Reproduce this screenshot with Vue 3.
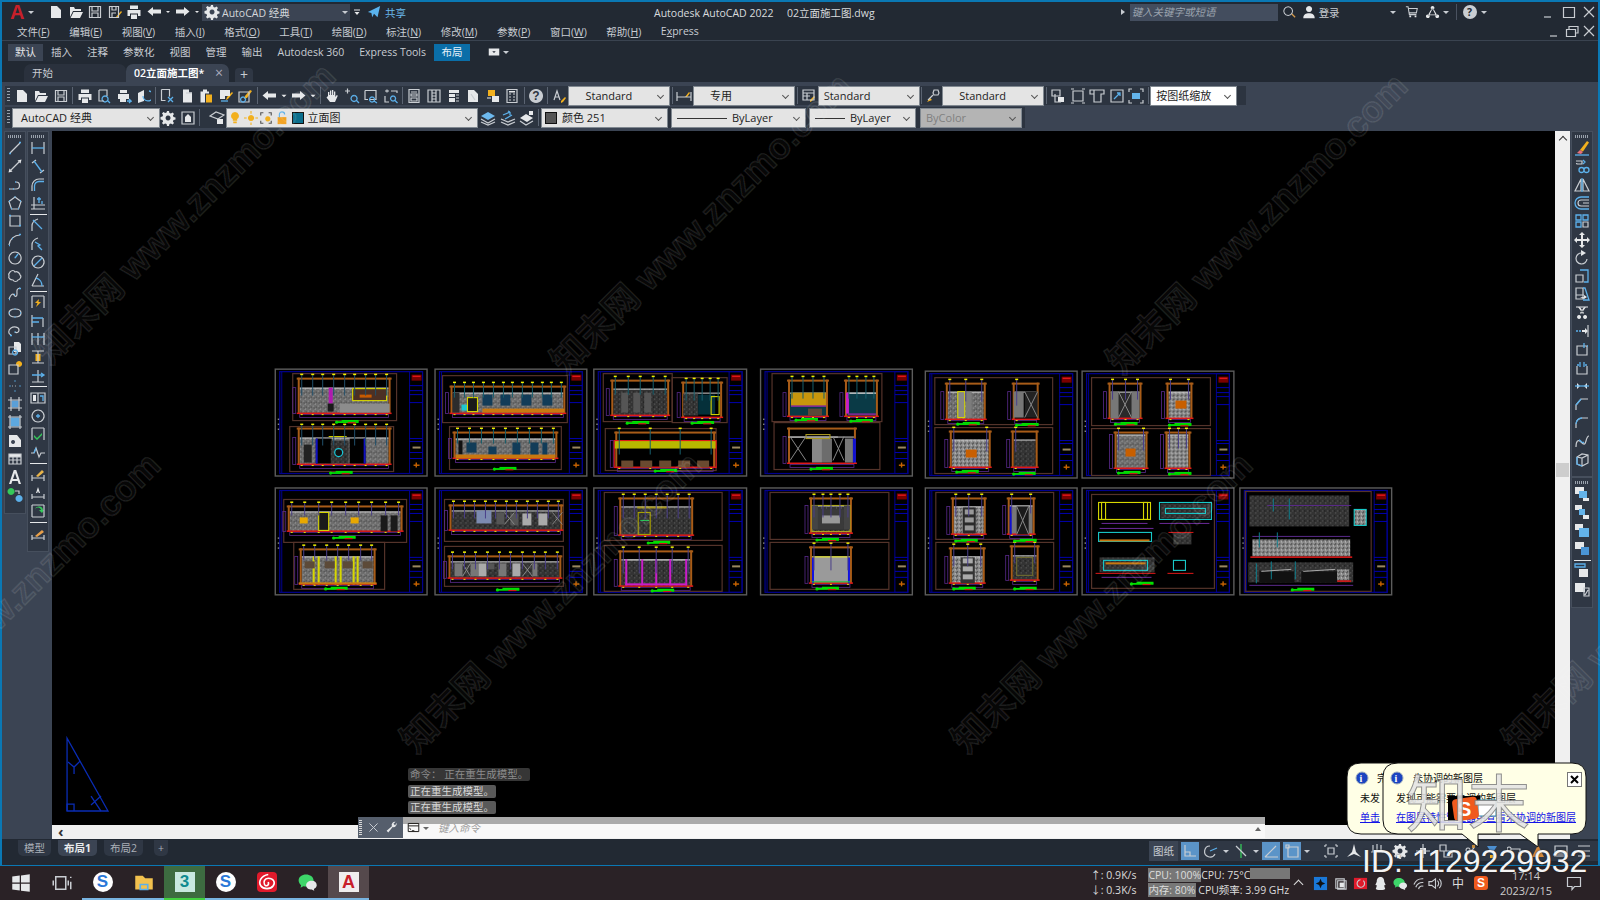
<template>
  <div class="screen">
    <div class="win">
      <div class="titlebar">
        <span class="logo-a">A</span>
        <span class="caret"></span>
        <div class="qat">
          <Ic v-for="n in quick" :key="n" :n="n" />
        </div>
        <div class="workspace">
          <Ic n="gear" />
          <span>AutoCAD 经典</span>
          <span class="caret caret--end"></span>
        </div>
        <Ic n="custom" class="custom" />
        <Ic n="share" class="share" />
        <span class="share-text">共享</span>
        <span class="title">Autodesk AutoCAD 2022 &nbsp;&nbsp;&nbsp; 02立面施工图.dwg</span>
        <span class="tri"></span>
        <div class="search">键入关键字或短语</div>
        <Ic n="search" class="search-ic" />
        <Ic n="user" class="user-ic" />
        <span class="login">登录</span>
        <span class="caret login-caret"></span>
        <Ic n="cart" class="cart" />
        <Ic n="a360" class="a360" />
        <span class="caret"></span>
        <span class="vsep"></span>
        <span class="help">?</span>
        <span class="caret"></span>
        <div class="winbtns">
          <Ic n="min" /><Ic n="max" /><Ic n="close" />
        </div>
      </div>

      <div class="menubar">
        <span v-for="m in menus" :key="m[0]" class="menu-item">{{ m[0] }}<template v-if="m[1]">(<u>{{ m[1] }}</u>)</template></span>
        <span class="menu-item"><span>E<u>x</u>press</span></span>
        <div class="docbtns">
          <Ic n="min" /><Ic n="restore" /><Ic n="close" />
        </div>
      </div>

      <div class="ribbon">
        <span v-for="t in ribbonTabs" :key="t" class="rtab" :class="{ 'rtab--on': t === '默认', 'rtab--blue': t === '布局' }">{{ t }}</span>
        <Ic n="panel" class="panel-ic" />
        <span class="caret"></span>
      </div>

      <div class="filetabs">
        <span class="ftab ftab--home">开始</span>
        <span class="ftab ftab--on">02立面施工图*<span class="ftab-x">×</span></span>
        <span class="ftab-add">+</span>
      </div>

      <div class="toolarea">
        <div class="tb tb--one">
          <span class="grip"></span>
          <template v-for="(grp, i) in row1" :key="i">
            <Ic v-for="n in grp" :key="n" :n="n" />
            <span class="sep"></span>
          </template>
          <Ic n="textstyle" />
          <div class="drop drop--std drop--c">Standard</div>
          <span class="sep"></span>
          <Ic n="dimstyle" />
          <div class="drop drop--std drop--c">专用</div>
          <span class="sep"></span>
          <Ic n="tablestyle" />
          <div class="drop drop--std">Standard</div>
          <span class="sep"></span>
          <Ic n="mleader" />
          <div class="drop drop--std drop--c">Standard</div>
          <span class="sep"></span>
          <Ic v-for="n in viewportIcons" :key="n" :n="n" />
          <span class="sep"></span>
          <div class="drop drop--scale">按图纸缩放</div>
        </div>
        <div class="tb tb--two">
          <span class="grip"></span>
          <div class="drop drop--ws">AutoCAD 经典</div>
          <Ic n="gear" class="ws-gear" /><Ic n="lockui" />
          <span class="sep"></span>
          <Ic n="layerprop" class="layer-prop" />
          <div class="drop drop--layer">
            <Ic n="bulb" /><Ic n="sun" /><Ic n="vpfreeze" /><Ic n="padlock" />
            <span class="swatch"></span>
            <span class="layer-name">立面图</span>
          </div>
          <Ic n="layerset" /><Ic n="layerprev" /><Ic n="layermatch" />
          <span class="sep"></span>
          <div class="drop drop--color"><span class="swatch swatch--gray"></span>颜色 251</div>
          <div class="drop drop--ltype"><span class="lt-line"></span>ByLayer</div>
          <div class="drop drop--lweight"><span class="lt-line lt-line--short"></span>ByLayer</div>
          <div class="drop drop--off">ByColor</div>
        </div>
      </div>

      <div class="work">
        <div class="side side--left">
          <div class="col">
            <span class="col-grip"></span>
            <Ic v-for="n in drawIcons" :key="n" :n="n" />
          </div>
          <div class="col">
            <span class="col-grip"></span>
            <template v-for="n in dimIcons" :key="n">
              <span v-if="n[0] === '-'" class="col-sep"></span>
              <Ic v-else :n="n" />
            </template>
          </div>
        </div>

        <div class="center">
          <svg class="canvas" viewBox="52 130 1503 695">
            <defs>
              <pattern id="pg" width="5" height="5" patternUnits="userSpaceOnUse">
                <rect width="5" height="5" fill="#6e6e6e" />
                <rect width="1" height="1" fill="#b0b0b0" />
                <rect x="3" y="2" width="1" height="1" fill="#a0a0a0" />
                <rect x="1" y="3" width="1" height="1" fill="#3c3c3c" />
                <rect x="4" y="4" width="1" height="1" fill="#3c3c3c" />
              </pattern>
              <pattern id="pd" width="5" height="5" patternUnits="userSpaceOnUse">
                <rect width="5" height="5" fill="#333" />
                <rect x="1" width="1" height="1" fill="#666" />
                <rect x="3" y="3" width="1" height="1" fill="#5c5c5c" />
                <rect y="3" width="1" height="1" fill="#111" />
              </pattern>
              <pattern id="pn" width="4" height="4" patternUnits="userSpaceOnUse">
                <rect width="4" height="4" fill="#8a8a8a" />
                <rect width="1" height="1" fill="#222" />
                <rect x="2" y="2" width="1" height="1" fill="#e0e0e0" />
                <rect x="3" y="1" width="1" height="1" fill="#333" />
              </pattern>
            </defs>
            <g v-for="(s, si) in sheets" :key="si" :transform="`translate(${s.x} ${s.y})`">
              <rect x=".5" y=".5" :width="s.w" height="107" fill="none" stroke="#5c5c5c" stroke-width="1.4" />
              <rect x="5" y="3" :width="s.w - 9" height="102" fill="none" stroke="#00008e" stroke-width="1.2" />
              <line x1="7" y1="3" x2="7" y2="105" stroke="#00008e" />
              <rect v-for="d in [50, 55, 60]" :key="d" x="3" :y="d" width="1.4" height="1.4" fill="#888" />
              <rect :x="s.w - 17" y="3" width="13" height="102" fill="none" stroke="#00008e" />
              <rect :x="s.w - 15" y="6" width="10" height="6" fill="#7a0000" />
              <rect :x="s.w - 14" y="7" width="8" height="1.4" fill="#e01818" />
              <line v-for="d in titleLines" :key="d" :x1="s.w - 17" :y1="d" :x2="s.w - 4" :y2="d" stroke="#0000b0" />
              <rect :x="s.w - 14" y="78" width="8" height="2" fill="#9a8860" />
              <rect :x="s.w - 13" y="96" width="6" height="1.4" fill="#c86400" />
              <rect :x="s.w - 11" y="94" width="1.4" height="5" fill="#c86400" />

              <rect v-for="(f, fi) in s.frames" :key="fi" :x="f[0]" :y="f[1]" :width="f[2]" :height="f[3]" fill="none" stroke="#54332a" stroke-width="1.2" />

              <g v-for="(e, ei) in s.elevs" :key="ei">
                <rect :x="e.x + 3" :y="e.y + e.wt" :width="e.w - 6" :height="e.h - e.wt" :fill="e.paint" />
                <rect :x="e.x + 3" :y="e.y + e.wt" :width="e.w - 6" height="1" fill="#cfcfcf" />
                <rect :x="e.x" :y="e.y" :width="e.w" height="2" fill="#a85c18" />
                <rect :x="e.x + 1" :y="e.y" width="2" :height="e.h" fill="#a85c18" />
                <rect :x="e.x + e.w - 3" :y="e.y" width="2" :height="e.h" fill="#a85c18" />
                <rect :x="e.x + 3" :y="e.y + e.h + 1" :width="e.w - 6" height="3" fill="none" stroke="#5a2a8c" stroke-width=".8" />
                <rect :x="e.x - 4" :y="e.y + e.wt" width="3" :height="e.h - e.wt" fill="none" stroke="#5a2a8c" stroke-width=".8" />
                <rect :x="e.x" :y="e.y + e.h - 1" :width="e.w" height="1.5" fill="#e01818" />
                <rect v-for="l in e.leaders" :key="'d' + l" :x="l - 1" :y="e.y + e.h + .5" width="2" height="1" fill="#e8e800" />
              </g>

              <rect v-for="(p, pi) in s.parts" :key="pi" :x="p[0]" :y="p[1]" :width="p[2]" :height="p[3]" :fill="p[4][0] === '~' ? 'none' : p[4]" :stroke="p[4][0] === '~' ? p[4].slice(1) : 'none'" stroke-width="1.1" />
              <line v-for="(l, li) in s.lines" :key="li" :x1="l[0]" :y1="l[1]" :x2="l[2]" :y2="l[3]" :stroke="l[4]" stroke-width="1" />

              <g v-for="(e, ei) in s.elevs" :key="'l' + ei">
                <template v-for="l in e.leaders" :key="l">
                  <line :x1="l" :y1="e.y - 3" :x2="l" :y2="e.y + e.wt + e.lead" :stroke="s.lead" stroke-width="1" />
                  <rect :x="l - 1.5" :y="e.y - 4" width="3" height="1.5" fill="#f0f000" />
                </template>
              </g>

              <circle v-if="s.ring" :cx="s.ring[0]" :cy="s.ring[1]" r="4" fill="#111" stroke="#18c8d8" stroke-width="1.2" />

              <g v-for="(b, bi) in s.labels" :key="bi" :transform="`translate(${b[0]} ${b[1]})`">
                <rect y=".6" width="23" height="1.8" fill="#00e000" />
                <rect x="6" y="-.6" width="17" height="1.6" fill="#00e000" />
                <rect x="12" y="1.6" width="8" height="1.2" fill="#d01818" />
                <circle cx="1" cy="1.6" r="1.6" fill="#00e000" />
              </g>
            </g>
            <g fill="none" stroke="#0a2cb4" stroke-width="1.3">
              <path d="M66 738V811H107Z" />
              <path d="M66 811v-7h7v7M67 762l6 5 6-6M73 767v7M90 805l10-9M90 796l10 15" />
            </g>
          </svg>
          <div class="hscroll"><span class="hs-arrow">‹</span></div>
        </div>

        <div class="vscroll">
          <span class="vs-up"></span>
          <span class="vs-thumb"></span>
        </div>

        <div class="side side--right">
          <div class="col col--r1">
            <span class="col-grip"></span>
            <Ic v-for="n in modifyIcons" :key="n" :n="n" />
          </div>
          <div class="col col--r2">
            <span class="col-grip"></span>
            <Ic v-for="n in orderIcons" :key="n" :n="n" />
            <span class="col-sep"></span>
            <Ic n="abc" /><Ic n="hatchfront" />
          </div>
        </div>
      </div>

      <div class="statusrow">
        <span class="ltab">模型</span>
        <span class="ltab ltab--on">布局1</span>
        <span class="ltab">布局2</span>
        <span class="ltab ltab--add">+</span>
        <div class="status">
          <span class="st-text">图纸</span>
          <span class="st-btn st-btn--on"><Ic n="grid-l" /></span>
          <span class="st-btn"><Ic n="polar" /></span><span class="caret"></span>
          <span class="st-btn"><Ic n="osnap" /></span><span class="caret"></span>
          <span class="st-btn st-btn--on"><Ic n="iso" /></span>
          <span class="st-btn st-btn--on"><Ic n="frame" /></span><span class="caret"></span>
          <span class="st-gap"></span>
          <Ic v-for="n in statusIcons" :key="n" :n="n" />
        </div>
      </div>
    </div>

    <div class="taskbar">
      <div class="task"><Ic n="windows" /></div>
      <div class="task"><Ic n="taskview" /></div>
      <div class="task task--run"><span class="sogou">S</span></div>
      <div class="task task--run"><Ic n="folder" /></div>
      <div class="task task--green"><span class="tile-3">3</span></div>
      <div class="task task--run"><span class="sogou">S</span></div>
      <div class="task task--run"><Ic n="netease" class="red-tile" /></div>
      <div class="task task--run"><Ic n="wechat" /></div>
      <div class="task task--active"><span class="tile-a">A</span></div>
      <div class="tray">
        <div class="net"><span>↑: 0.9K/s</span><span>↓: 0.3K/s</span></div>
        <div class="mon">
          <div><span class="mon-hi">CPU: 100%</span>CPU: 75°C<span class="mon-fill"></span></div>
          <div><span class="mon-hi">内存: 80%</span> CPU频率: 3.99 GHz</div>
        </div>
        <span class="chev"></span>
        <Ic v-for="n in trayIcons" :key="n" :n="n" />
        <span class="ime">中</span>
        <span class="s-tray">S</span>
        <div class="clock"><span>17:14</span><span>2023/2/15</span></div>
        <Ic n="notify" class="notify" />
      </div>
    </div>

    <div class="cmd-history">
      <span class="cmd-line cmd-line--dark">命令： 正在重生成模型。</span>
      <span class="cmd-line">正在重生成模型。</span>
      <span class="cmd-line">正在重生成模型。</span>
    </div>
    <div class="cmd">
      <div class="cmd-tools">
        <span class="cmd-grip"></span>
        <Ic n="close" /><Ic n="wrench" />
      </div>
      <div class="cmd-input">
        <div class="cmd-strip"></div>
        <div class="cmd-field">
          <Ic n="prompt" /><span class="caret caret--dark"></span>
          <span class="cmd-ph">键入命令</span>
          <span class="cmd-up"></span>
        </div>
      </div>
    </div>

    <svg class="bubbles" width="260" height="100" viewBox="1340 755 260 100">
      <path d="M1361 763H1500V834H1361Q1347 834 1347 820V777Q1347 763 1361 763Z" fill="#ffffe6" stroke="#111" />
      <circle cx="1362" cy="778" r="6" fill="#1c44c0" stroke="#9ab" />
      <text x="1359.5" y="782" fill="#fff" font-size="10" font-weight="700" font-family="Liberation Serif">i</text>
      <text x="1377" y="782" class="bb">完</text>
      <text x="1360" y="802" class="bb">未发</text>
      <text x="1360" y="821" class="bb bb--link">单击</text>
      <path d="M1398 763H1572Q1586 763 1586 777V820Q1586 834 1572 834H1538V847L1520 834H1478V847L1462 834H1398Q1383 834 1383 820V777Q1383 763 1398 763Z" fill="#ffffe6" stroke="#111" />
      <circle cx="1397" cy="778" r="6" fill="#1c44c0" stroke="#9ab" />
      <text x="1394.5" y="782" fill="#fff" font-size="10" font-weight="700" font-family="Liberation Serif">i</text>
      <text x="1413" y="782" class="bb">未协调的新图层</text>
      <rect x="1567.5" y="772.5" width="14" height="14" fill="#fff" stroke="#777" />
      <path d="M1571 776l7 7M1578 776l-7 7" stroke="#000" stroke-width="2" />
      <text x="1396" y="802" class="bb">发现可能需要协调的新图层</text>
      <text x="1396" y="821" class="bb bb--link">在图层特性管理器中查看未协调的新图层</text>
      <rect x="1448" y="796" width="32" height="4" fill="#000" />
      <rect x="1448" y="796" width="8" height="24" fill="#000" />
      <rect x="1478" y="800" width="18" height="16" fill="#fff" stroke="#38a" />
      <rect x="1453" y="798" width="25" height="22" rx="4" fill="#f05a1e" transform="rotate(-8 1465 809)" />
      <text x="1458" y="816" fill="#fff" font-size="20" font-weight="700" font-family="Liberation Sans">S</text>
    </svg>

    <svg class="watermark" width="1600" height="900" viewBox="0 0 1600 900">
      <text v-for="(w, i) in marks" :key="i" :transform="`translate(${w[0]} ${w[1]}) rotate(-45)`" class="wm">知末网 www.znzmo.com</text>
    </svg>

    <div class="zm">知末</div>
    <div class="id-tag">ID: 1129229932</div>
  </div>
</template>

<script setup>
import { h } from "vue"

const G = "#c9cdd2"
const B = "#5cb0ea"
const W = "#e6e8ea"
const Y = "#f2b01e"

// s = grey stroke, b = blue stroke, f = light fill, y = yellow fill, c / c2 = [d, colour], t = label
const icons = {
  new: { f: "M3 2h6l4 4v8H3z" },
  open: { f: "M2 3h4l1 2h6v2H5l-3 6zM5.5 8H15l-3 6H2.5z" },
  save: { s: "M2.5 2.5h11v11h-11zM5 3v4h6V3M5 13V9h6v4" },
  saveas: { s: "M2.5 2.5h9v11h-9zM5 3v3h4V3M5 13V9h4", c: ["M9 13l5-6 1 1-5 6z", Y] },
  print: { f: "M4 1.5h8V5H4zM1.5 6h13v6H12V9.5H4V12H1.5zM5 10.5h6V15H5z" },
  preview: { s: "M3 2h8v6M3 2v11h5", c: ["M9 8a3 3 0 1 0 .1 0zM11 12l3 3", B] },
  plot: { f: "M4 2h7v3H4zM2 6h11v5H2zM4 11h6v3H4z", b: "M11 13h4l-2-2m2 2l-2 2" },
  publish: { f: "M3 5l6-3v11l-6 2z", b: "M8 8a5 5 0 1 0 6-5" },
  cut: { s: "M2.5 1.5h8v7M2.5 1.5v11h4", b: "M9 9l5 5M14 9l-5 5" },
  copy: { f: "M4 1.5h6v3h3v10H4z", s: "M7 5h6" },
  paste: { f: "M5 1.5h4v2h2v2H7v9H2.5V3.5H5z", c: ["M8 6.5h6v8H8z", Y] },
  match: { f: "M2 2h10v6H7v3H2z", c: ["M9 9l5-5 1 1-5 6-2 1z", Y], b: "M3 13h7" },
  block: { s: "M2 4h10v10H2z", c: ["M8 8l5-6 2 1-5 7-3 1z", Y], b: "M6 9a2.500 2.500 0 1 0 .1 0" },
  undo: { f: "M7 3L1.500 7.500 7 12V9.500h8v-4H7z" },
  undoc: { f: "M4 6l4 4 4-4z" },
  redo: { f: "M9 3l5.500 4.500L9 12V9.500H1v-4h8z" },
  pan: { f: "M4 8V4h1.300v3H6V2.500h1.300V7H8V2h1.300v5H10V3.500h1.300V9l1.500-2 1 .8L11 14H6L2.500 9.500l1-1z" },
  zoom: { s: "M1 3h5M3.500 .5v5", b: "M10 7.500a3 3 0 1 0 .1 0M12.500 12.500l2.500 2.500" },
  zoomwin: { s: "M2 2.500h11v9H6M2 2.500v9h3", b: "M9 9a2.500 2.500 0 1 0 .1 0M11 13l3 2" },
  zoomprev: { s: "M4 1.500v3M2 3h4M8 3h6v2M2 8v6h4", b: "M10 8a2.500 2.500 0 1 0 .1 0M12 12.500l2.500 2.500" },
  prop: { s: "M3 1.500h10v13H3zM5 4h6M5 6h6v2H5zM5 10h6v3H5z" },
  design: { s: "M2 2h12v12H2zM6 2v12M10 2v12M6 5h4M6 8h4M6 11h4" },
  sheet: { f: "M3 2h10v3H3zM3 6h6v3H3zM3 10h6v4H3z", s: "M10 7h3M10 10h3M10 13h3" },
  tool: { f: "M3 2h6l4 4v8H3z", s: "M6 6l4 6" },
  markup: { c: ["M3 2h7v6H3z", Y], f: "M7 8h7v6H7z", s: "M2 10h4" },
  calc: { s: "M3 1.500h10v13H3zM5 6h2M9 6h2M5 9h2M9 9h2M5 12h2M9 12h2", f: "M5 3h6v1.500H5z" },
  help: { c: ["M8 1a7 7 0 1 0 .1 0z", "#c9cdd2"], t: "?" },
  textstyle: { s: "M2 12l3-9 3 9M3 9h4", c: ["M9 13l4-4 1 1-3 4-2 1z", Y] },
  dimstyle: { s: "M1 4v9M15 4v9M1 9h14", c: ["M9 9l4-5 1 1-3 4z", Y] },
  tablestyle: { s: "M2 2h11v10H2zM2 5h11M2 8h7M6 5v7", c: ["M9 12l4-4 1 1-3 4-2 1z", Y] },
  mleader: { s: "M9 2h4l1 3-1 2H9L8 5zM8 7L3 12", c: ["M2 14l3-4 2 2z", Y] },
  vpone: { s: "M2 2h8v6H2zM5 6v8h6", f: "M8 9h6v5H8z" },
  vptwo: { s: "M3 3h10v10H3zM1 1h3M12 1h3M1 15h3M12 15h3" },
  vpthree: { s: "M1 2h14v4h-3v8H5V6H1zM5 2v4" },
  vpfour: { s: "M2 2h12v12H2z", b: "M5 11L11 5M8 5h3v3" },
  vpfive: { s: "M1 4V1h3M12 1h3v3M1 12v3h3M12 15h3v-3", c: ["M4 5h8v6H4z", "#63b3ea"] },
  gear: { c: ["M7 1h2l.4 2 1.500.6 1.700-1.100 1.400 1.400-1.100 1.700.6 1.500 2 .4v2l-2 .4-.6 1.500 1.100 1.700-1.400 1.400-1.700-1.100-1.500.6-.4 2H7l-.4-2-1.500-.6-1.700 1.100-1.400-1.400 1.100-1.700-.6-1.500-2-.4V7l2-.4.6-1.500-1.100-1.700 1.400-1.400 1.700 1.100 1.500-.6zM8 5.500a2.500 2.500 0 1 0 .1 0z", W] },
  lockui: { s: "M2 2h12v12H2z", f: "M5 7l3-3 3 3v5H5z" },
  layerprop: { s: "M1 6l6-4 8 3-6 4z", f: "M8 9h6v5H8z" },
  bulb: { y: "M8 1a4.500 4.500 0 0 0-2.500 8.200V11h5V9.200A4.500 4.500 0 0 0 8 1zM6 12h4v2H6z" },
  sun: { y: "M8 4.500a3.500 3.500 0 1 0 .1 0zM7.400 0h1.200v3H7.400zM7.400 13h1.200v3H7.400zM0 7.400h3v1.200H0zM13 7.400h3v1.200h-3z" },
  vpfreeze: { c: ["M2 5V2h3M11 2h3v3M2 11v3h3M11 14h3v-3", "#555"], y: "M10 6a3 3 0 1 0 .1 0z" },
  padlock: { c: ["M3 7h10v8H3z", "#f2a11e"], b: "M5 7V4a3 3 0 0 1 6 0" },
  layerset: { c: ["M1 6l7-4 7 4-7 4z", "#6db9ee"], s: "M1 9l7 4 7-4M1 12l7 3 7-3" },
  layerprev: { s: "M1 9l7 3 7-3M1 12l7 3 7-3", b: "M3 5l7-3M10 2l-2-1M10 2v3M5 9l7-4" },
  layermatch: { f: "M1 8l6-4 7 4-6 4zM10 1h4v4h-4z", s: "M1 11l6 4 7-4" },
  line: { s: "M3 13L13 3", b: "M2 13.500h2M12 2.500h2" },
  xline: { s: "M3 13L13 3", f: "M1.500 14.500l1-4 3 3zM14.500 1.500l-4 1 3 3z" },
  pline: { s: "M3 12h6a3 3 0 0 0 0-7", b: "M2 12h1M8 5h1M6 12h1" },
  polygon: { s: "M8 2l6 4.500-2.500 7.500h-7L2 6.500z", b: "M7.500 2h1M2 6h1M13 6h1M4 13.500h1M11 13.500h1" },
  rect: { s: "M3 3h10v10H3z", b: "M2 2.500h2M12 12.500h2" },
  arc: { s: "M2 13a11 11 0 0 1 11-10", b: "M2 13.500h1M5 6.500h1M12 2.500h2" },
  circle: { s: "M8 2a6 6 0 1 0 .1 0z", b: "M8 8l3-4M7.500 7.500h1" },
  cloud: { s: "M3 4c2-2 4-2 5 0 2-1 5 1 5 3 2 1 0 5-2 5-1 2-4 2-5 0-3 0-5-2-4-4-1-2 0-3 1-4z" },
  spline: { s: "M2 13c2-5 4-6 5-4s3 2 3-1-1-5 3-6", b: "M2 13.500h1M7 8.500h1M12 2.500h2" },
  ellipse: { s: "M8 4c4 0 6 2 6 4s-2 4-6 4-6-2-6-4 2-4 6-4z", b: "M7.500 4h1M2 8h1M13 8h1M7.500 12h1" },
  earc: { s: "M4 12c-3-1-3-5 0-7s8-1 8 2-3 3-4 2", b: "M3 12.500h2M7.500 9h1" },
  insert: { f: "M7 1h5l2 2v8H7z", s: "M2 6h7v7H2z", b: "M8 9a2.500 2.500 0 1 0 .1 0" },
  mkblock: { s: "M2 5h9v9H2z", y: "M12 1a3 3 0 1 0 .1 0z" },
  point: { b: "M7.500 3h1M2.500 8h1M12.500 8h1M7.500 13h1", s: "M5 8h.8M8 8h.8" },
  hatch: { s: "M1 4h14M1 12h14M4 1v14M12 1v14", c: ["M4.500 4.500h7v7h-7z", "#5a9fd8"] },
  gradient: { s: "M1 3h14M1 13h14M3 1v14M13 1v14", c: ["M3.500 3.500h9v9h-9z", "#5da8e0"] },
  region: { f: "M2 2h8l4 5v7H2z", c2: ["M6 7a2 2 0 1 0 .1 0z", "#3b4453"] },
  table: { s: "M2 3h12v10H2zM2 6h12M2 9h12M6 6v7M10 6v7", f: "M2 3h12v3H2z" },
  mtext: { f: "M6.800 1h2.400L14 15h-2.300l-1-3H5.300l-1 3H2zM6 10h4L8 4z" },
  addsel: { c: ["M4 1a3.500 3.500 0 1 0 .1 0z", "#35c95a"], c2: ["M12 8a3.500 3.500 0 1 0 .1 0z", "#5cb0ea"], s: "M8 4h4v3" },
  dimlinear: { s: "M2 2v12M14 2v12", b: "M2 8h12" },
  dimalign: { s: "M2 5l4-3M10 15l4-3", b: "M4 3l8 11" },
  dimarc: { s: "M2 14V9a7 7 0 0 1 7-7h5", b: "M4.500 14V9a4.500 4.500 0 0 1 4.500-4.500h5" },
  dimord: { s: "M4 2v12M1 14h14M1 10h14", b: "M9 2v6M7 4h4M12 6v3" },
  dimrad: { s: "M2 14V9c0-4 3-6 6-7", b: "M3 3l9 9" },
  dimjog: { s: "M2 14V9c0-4 3-6 6-7", b: "M5 6l5 3-2 1 4 4" },
  dimdia: { s: "M8 2a6 6 0 1 0 .1 0z", b: "M4 12l8-8" },
  dimang: { s: "M2 14h12M2 14l6-12", b: "M6 6a8 8 0 0 1 6 8" },
  qdim: { s: "M2 2v12M14 2v12M2 2h12", y: "M9 5L5 9h2.500L6 13l5-5H8.500z" },
  dimbase: { s: "M2 2v12M13 5v9", b: "M2 5h11M2 9h7" },
  dimcont: { s: "M2 2v12M8 2v12M14 2v12", b: "M2 6h12" },
  dimspace: { s: "M2 2h12M2 14h12M8 2v12", y: "M5.500 5h5v7h-5z" },
  dimbreak: { s: "M2 14h12M8 2v12", b: "M2 7h12M11 5l3 2-3 2" },
  tol: { s: "M1 3h14v10H1zM8 3v10", f: "M3 5h3v6H3z", b: "M10 6h3v5" },
  center: { s: "M8 2a6 6 0 1 0 .1 0z", b: "M6 8h4M8 6v4" },
  inspect: { s: "M2 2v12M14 2v12M2 2h12", c: ["M4 9l3 3 5-5v2l-5 5-3-3z", "#35c95a"] },
  jogline: { s: "M1 8h3l2-5 3 9 2-4h4", b: "M4 8l2-5" },
  dimedit: { s: "M2 8v6M14 8v6M2 11h12", c: ["M6 9l6-6 2 2-6 5z", "#e8b44a"] },
  dimtext: { s: "M2 9v5M14 9v5M2 12h12", f: "M6 8l2-6 2 6H8.800L8 6l-.8 2z" },
  dimupdate: { s: "M2 2v12M14 2v12M2 2h12M2 14h12", c: ["M5 8a3 3 0 0 1 6-1h-2l3 3 2-3h-1a4 4 0 0 0-8 1z", "#35c95a"] },
  dimstyle2: { s: "M2 9v5M14 9v5M2 12h12", c: ["M5 10l7-6 2 2-7 5z", "#e8a04a"] },
  erase: { c: ["M6 10l7-9 2 1.500-6 9z", "#f2b01e"], c2: ["M3 13l3-3 3 2-2 2z", "#e8707a"], b: "M1 15h14" },
  copy2: { s: "M2 3h6v3H3.500a1 1 0 0 1-1-1", b: "M9 2l2 2-2 2M5 12a2.500 2.500 0 0 1 5 0 2.500 2.500 0 0 1 5 0 2.500 2.500 0 0 1-5 0 2.500 2.500 0 0 1-5 0" },
  mirror: { s: "M7 2L1 14h6zM9 2l6 12H9z", b: "M8 1v14" },
  offset: { b: "M15 2H7a6 6 0 0 0 0 12h8", s: "M15 5H7a3 3 0 0 0 0 6h8M15 8H9" },
  array: { b: "M2 2h5v5H2zM9 2h5v5H9zM2 9h5v5H2z", s: "M9 9h5v5H9z" },
  move: { f: "M8 0l3 3H9v4h4V5l3 3-3 3V9H9v4h2l-3 3-3-3h2V9H3v2L0 8l3-3v2h4V3H5z" },
  rotate: { s: "M13 9a5.500 5.500 0 1 1-5-6", f: "M7 0l5 3-5 3z" },
  scale: { s: "M2 7h7v7H2z", b: "M6 2h8v12h-4" },
  stretch: { s: "M2 2h7v11H2zM2 9h8", b: "M9 2h2l4 12h-6", f: "M6 11h4v-2l3 2-3 2z" },
  trim: { s: "M2 2h12", f: "M4 2l5 7 1-1-4-6zM12 2L7 9l-1-1 4-6zM5 10a2 2 0 1 0 .1 0zM11 10a2 2 0 1 0 .1 0z" },
  extend: { s: "M14 2v12", b: "M2 8h2M5 8h2", f: "M8 7h3V5l3 3-3 3V9H8z" },
  brkpt: { s: "M3 5h10v9H3z", b: "M10 2v5M13 5h1" },
  brk: { s: "M3 6v8h10V6", b: "M6 2v5M10 2v5M3 5h2M11 5h2" },
  join: { b: "M1 8h14", f: "M3 5l3 3-3 3zM13 5l-3 3 3 3z" },
  chamfer: { s: "M2 14V9l5-6h7", b: "M2 9l5-6" },
  fillet: { s: "M2 14V10a6 6 0 0 1 6-6h6", b: "M2 10a6 6 0 0 1 6-6" },
  blend: { s: "M2 14c0-6 2-8 5-5s4 3 5-1 2-5 3-5", b: "M5 7c2 0 3 4 5 2" },
  solid: { s: "M3 6l5-3 6 1v8l-6 3-5-2zM8 7v8M3 6l5 1 6-3", b: "M3 6v7l5 2" },
  ord1: { f: "M1 1h9v7H1zM9 12h6v3H9z", c2: ["M5 5h8v7H5z", "#63b3ea"] },
  ord2: { f: "M1 1h7v5H1zM9 11h6v4H9z", c2: ["M5 5h6v6H5z", "#63b3ea"] },
  ord3: { f: "M1 1h8v6H1z", c2: ["M5 5h10v9H5z", "#63b3ea"] },
  ord4: { f: "M1 1h9v7H1z", c2: ["M7 6h8v8H7z", "#4a95d6"] },
  abc: { b: "M1 1h10v3H1z", f: "M5 6h9v8H5z" },
  hatchfront: { f: "M1 1h10v9H1z", s: "M10 6h5v8h-5zM11 13l3-5" },
  custom: { f: "M2 3h12v2H2zM3 8h10l-5 6z" },
  share: { c: ["M1 8L15 1l-3 13-4-4-2 4-1-5z", "#5ab3ee"] },
  search: { s: "M7 2a5 5 0 1 0 .1 0z", c: ["M10.500 10.500l4 4 1-1-4-4z", "#d69b4c"] },
  user: { f: "M8 1a3.500 3.500 0 1 0 .1 0zM1.500 15c0-4 3-5.500 6.500-5.500s6.500 1.500 6.500 5.500z" },
  cart: { s: "M1 2h2.500L5 11h8M4 4h10l-1 5H5", f: "M5 12h2v2H5zM11 12h2v2h-2z" },
  a360: { f: "M8 1a2 2 0 1 0 .1 0zM3 10a2 2 0 1 0 .1 0zM13 10a2 2 0 1 0 .1 0zM7 4L3 11h10L9 4H8L11 10H5l3-6z" },
  min: { s: "M3 13h7" },
  max: { s: "M2.500 3.500h11v10h-11z" },
  close: { s: "M3 3l10 10M13 3L3 13" },
  restore: { s: "M2.500 6.500h9v7h-9zM5 6V3.500h9V10h-2" },
  panel: { f: "M2 4h12v8H2z", c2: ["M6 7h4l-2 2z", "#222933"] },
  "grid-l": { s: "M3 2v11h11M3 9h5v4" },
  polar: { s: "M7 3a5.500 5.500 0 1 0 5 8", b: "M7 8l7-3" },
  osnap: { c: ["M8 1v14", "#35c95a"], s: "M3 3l10 10" },
  iso: { s: "M2 14L13 3M2 14h13" },
  frame: { s: "M4 4h10v10H4zM2 2h3v3H2z" },
  s1: { s: "M2 2h2M12 2h2M2 14h2M12 14h2M2 2v2M14 2v2M2 12v2M14 12v2M5 5h6v6H5z" },
  s2: { f: "M8 1l2 8 5 5-7-3-7 3 5-5z" },
  s3: { s: "M4 2v7M8 1v8M12 2v7M2 9h12" },
  s4: { s: "M8 1v14M1 8h14", f: "M5 5h6v6H5z" },
  s6: { s: "M2 2h6v6H2zM6 8h8v6H6z" },
  s7: { s: "M7 5a2 2 0 1 0 .1 0zM7 11l6-6", c: ["M11 2h3v3h-3z", "#c08a3c"] },
  s8: { c: ["M3 3h10l-5 8z", "#4c8fd0"], y: "M6 12h5v3H6z" },
  s9: { s: "M2 4a2 2 0 1 0 .1 0zM4 6h9v5", c: ["M11 9h4v4h-4z", "#c08a3c"] },
  s10: { c: ["M8 2l6 12H2z", "#d68a3c"] },
  s11: { s: "M2 3h12v8H2zM1 13h14" },
  s12: { s: "M2 3h12M2 8h12M2 13h12" },
  windows: { f: "M1 2.800l6-.8v5.500H1zM8 1.900L15 1v6.500H8zM1 8.500h6V14l-6-.8zM8 8.500h7V15l-7-.9z" },
  taskview: { s: "M3 3h8v10H3zM1 6v4M13 6v4M15 3v1M15 7v6" },
  folder: { c: ["M1 3h6l2 2h6v9H1z", "#f2c14e"], b: "M5 10h6v4H5z" },
  netease: { c: ["M9 2C3 3 1 8 3 11c2 3 8 3 10 0s0-6-4-6c-3 0-4 3-3 5s4 1 3-2", "#fff"] },
  wechat: { c: ["M6.500 2C3 2 .5 4 .5 6.800c0 1.500.8 2.800 2 3.700L2 12.500l2.300-1.200c1.500.4 3 .4 4 .1 2.700-.6 4.500-2.600 4.200-4.900C12.200 3.800 9.500 2 6.500 2z", "#3dd669"], f: "M11 7c-2.500 0-4.500 1.500-4.500 3.500S8.500 14 11 14l2 1-.3-1.500c1.300-.6 2.300-1.800 2.300-3C15 8.500 13.500 7 11 7z" },
  tencent: { f: "M8 1c-3 0-4 2.500-4 5L2.500 9.500 4 9.800C4 12 3 13 3 13.500S5 15 8 15s5-1 5-1.500-1-1.500-1-3.700l1.500-.3L12 6c0-2.500-1-5-4-5z" },
  wifi: { s: "M1 9a10 10 0 0 1 10-6M3 12a7 7 0 0 1 8-5M6 14a3.500 3.500 0 0 1 5-3" },
  volume: { s: "M1 6h3l4-3v10l-4-3H1zM10 5a4 4 0 0 1 0 6M12 3a7 7 0 0 1 0 10" },
  feishu: { c: ["M1 1h14v14H1z", "#1a78d8"], c2: ["M8 3l1.500 3.500L13 8l-3.500 1.500L8 13l-1.500-3.500L3 8l3.500-1.500z", "#111"] },
  copilot: { s: "M3 3h9v10H3zM5 5h9v9H5z", f: "M7 7h5v5H7z" },
  neteasetray: { c: ["M1 2h14v12H1z", "#e01a2b"], s: "M8 4a4 4 0 1 0 3 1" },
  notify: { s: "M1.500 2.500h13v9h-6l-2.500 3v-3H1.500z" },
  wrench: { f: "M14 2a4 4 0 0 1-4.600 5.500L4 14l-2-2 6.500-5.500A4 4 0 0 1 13 1l-2.500 2.500 2 2z" },
  prompt: { s: "M1.500 3h13v10h-13zM1.500 6h13M3 9l2 1.500M6 12h3" },
}
icons.undoc2 = icons.undoc

const fillPath = (c) => h("path", {
  d: c[0],
  fill: c[0].endsWith("z") ? c[1] : "none",
  stroke: c[0].endsWith("z") ? "none" : c[1],
  "stroke-width": 1.3,
  "fill-rule": "evenodd",
})

const Ic = (props) => {
  const i = icons[props.n] || {}
  const kids = []
  if (i.c) kids.push(fillPath(i.c))
  if (i.f) kids.push(h("path", { d: i.f, fill: W, "fill-rule": "evenodd" }))
  if (i.c2) kids.push(fillPath(i.c2))
  if (i.y) kids.push(h("path", { d: i.y, fill: Y, "fill-rule": "evenodd" }))
  if (i.s) kids.push(h("path", { d: i.s, fill: "none", stroke: G, "stroke-width": 1.2 }))
  if (i.b) kids.push(h("path", { d: i.b, fill: "none", stroke: B, "stroke-width": 1.3 }))
  if (i.t) kids.push(h("text", { x: 8, y: 12, "text-anchor": "middle", "font-size": 12, "font-weight": 700, "font-family": "Liberation Sans", fill: "#2c3440" }, i.t))
  return h("svg", { class: `ic ic--${props.n}`, viewBox: "0 0 16 16" }, kids)
}
Ic.props = ["n"]

const quick = ["new", "open", "save", "saveas", "print", "undo", "undoc", "redo", "undoc2"]
const menus = [["文件", "F"], ["编辑", "E"], ["视图", "V"], ["插入", "I"], ["格式", "O"], ["工具", "T"], ["绘图", "D"], ["标注", "N"], ["修改", "M"], ["参数", "P"], ["窗口", "W"], ["帮助", "H"]]
const ribbonTabs = ["默认", "插入", "注释", "参数化", "视图", "管理", "输出", "Autodesk 360", "Express Tools", "布局"]
const row1 = [
  ["new", "open", "save"],
  ["print", "preview", "plot", "publish"],
  ["cut", "copy", "paste", "match", "block"],
  ["undo", "undoc", "redo", "undoc2"],
  ["pan", "zoom", "zoomwin", "zoomprev"],
  ["prop", "design", "sheet", "tool", "markup", "calc"],
  ["help"],
]
const viewportIcons = ["vpone", "vptwo", "vpthree", "vpfour", "vpfive"]
const drawIcons = ["line", "xline", "pline", "polygon", "rect", "arc", "circle", "cloud", "spline", "ellipse", "earc", "insert", "mkblock", "point", "hatch", "gradient", "region", "table", "mtext", "addsel"]
const dimIcons = ["dimlinear", "dimalign", "dimarc", "dimord", "-1", "dimrad", "dimjog", "dimdia", "dimang", "-2", "qdim", "dimbase", "dimcont", "dimspace", "dimbreak", "-3", "tol", "center", "inspect", "jogline", "-4", "dimedit", "dimtext", "dimupdate", "-5", "dimstyle2"]
const modifyIcons = ["erase", "copy2", "mirror", "offset", "array", "move", "rotate", "scale", "stretch", "trim", "extend", "brkpt", "brk", "join", "chamfer", "fillet", "blend", "solid"]
const orderIcons = ["ord1", "ord2", "ord3", "ord4"]
const statusIcons = ["s1", "s2", "s3", "gear", "s4", "s6", "s7", "s8", "s9", "s10", "s11", "s12"]
const trayIcons = ["feishu", "copilot", "neteasetray", "tencent", "wechat", "wifi", "volume"]

const titleLines = [17, 22, 26, 34, 70, 73, 84, 90]
const O = "#c87810"
const T = "#0e7c8c"
const D = "#1a1a1a"
const YL = "#d8d800"
const M = "#c81ec8"
const GR = "#888"

const e = (x, y, w, h, wt, fill = "pg", n = 0, lead = 8) => {
  const count = n || Math.round(w / 11)
  const leaders = []
  for (let i = 0; i < count; i++) leaders.push(x + 5 + Math.round((i * (w - 10)) / Math.max(count - 1, 1)))
  return { x, y, w, h, wt, paint: fill[0] === "#" ? fill : `url(#${fill})`, leaders, lead }
}

const sheets = [
  { x: 274, y: 368, w: 152, lead: "#204f6a",
    frames: [[18, 5, 104, 47], [15, 58, 104, 45]],
    elevs: [e(22, 9, 95, 36, 10), e(22, 59, 95, 37, 10)],
    parts: [[54, 19, 4, 16, "#b01ab0"], [53, 35, 6, 8, D], [78, 20, 34, 12, "#4c3024"], [78, 20, 34, 12, "~" + YL], [85, 26, 12, 3, "#c85a00"], [65, 35, 50, 9, "#8c8c8c"], [41, 70, 16, 25, "#000"], [75, 70, 16, 25, "#000"], [41, 70, 2, 25, "#1010c0"], [89, 70, 2, 25, "#1010c0"], [56, 72, 18, 23, "url(#pd)"], [29, 76, 8, 18, "#222"]],
    ring: [64, 84], lines: [[54, 68, 72, 68, YL]],
    labels: [[61, 52], [55, 103]] },
  { x: 434, y: 368, w: 152, lead: "#165e6c",
    frames: [[8, 7, 125, 47], [15, 58, 112, 43]],
    elevs: [e(15, 17, 117, 28, 7, "pg", 12, 5), e(18, 63, 106, 27, 7, "pg", 9, 5)],
    parts: [[18, 24, 7, 20, "#2c2c2c"], [27, 36, 6, 6, "#1ec8d0"], [33, 29, 10, 14, D], [33, 29, 10, 14, "~" + YL], [48, 26, 10, 11, "#123c58"], [66, 26, 10, 11, "#123c58"], [87, 26, 10, 11, "#123c58"], [108, 26, 10, 11, "#123c58"], [48, 40, 82, 4, O], [24, 72, 4, 14, "#111"], [32, 74, 10, 10, "#123c58"], [54, 78, 8, 8, "#123c58"], [78, 74, 8, 14, "#123c58"], [96, 74, 8, 14, "#123c58"], [108, 74, 5, 14, "#123c58"], [21, 86, 100, 4, O]],
    lines: [], labels: [[59, 99]] },
  { x: 593, y: 368, w: 153, lead: "#165e6c",
    frames: [[10, 5, 69, 48], [79, 9, 55, 45], [12, 60, 111, 42]],
    elevs: [e(17, 11, 60, 36, 9, "pd", 5, 6), e(88, 13, 42, 36, 11, "#000", 5, 8), e(21, 63, 102, 36, 9, "#000", 4, 14)],
    parts: [[28, 24, 7, 20, "#555"], [40, 24, 7, 20, "#555"], [51, 24, 7, 20, "#555"], [90, 25, 15, 22, "url(#pd)"], [105, 26, 17, 20, "#05303a"], [118, 28, 8, 18, "~" + YL], [21, 72, 102, 8, "#b8b800"], [21, 72, 102, 27, "~#e01818"], [28, 92, 12, 7, "#6a4a30"], [47, 92, 12, 7, "#6a4a30"], [66, 92, 12, 7, "#6a4a30"], [85, 92, 12, 7, "#6a4a30"], [104, 92, 12, 7, "#6a4a30"]],
    lines: [], labels: [[33, 53], [98, 53], [61, 101]] },
  { x: 760, y: 368, w: 152, lead: "#165e6c",
    frames: [[12, 5, 110, 48], [14, 54, 106, 47]],
    elevs: [e(27, 11, 42, 37, 13, "#0a3a46", 4, 6), e(84, 11, 35, 37, 13, "#0a3a46", 4, 6), { x: 27, y: 59, w: 70, h: 36, wt: 9, paint: "#000", leaders: [], lead: 0 }],
    parts: [[31, 24, 35, 13, "#c8960c"], [31, 37, 35, 1, M], [48, 40, 14, 7, "#5c4838"], [88, 24, 28, 1, "#ccc"], [88, 45, 28, 1, M], [86, 24, 3, 21, M], [52, 70, 10, 24, "#888"], [62, 70, 10, 24, "#6c6c6c"], [85, 70, 8, 24, "#777"], [28, 68, 50, 1, "#bbb"], [46, 66, 24, 4, "~#a89820"], [93, 70, 3, 24, "#1010d0"]],
    lines: [[30, 68, 46, 92, GR], [46, 68, 30, 92, GR], [73, 68, 84, 92, GR], [84, 68, 73, 92, GR]],
    labels: [[35, 50], [90, 51], [50, 99]] },
  { x: 925, y: 370, w: 152, lead: "#4a3f8a",
    frames: [[10, 7, 118, 47], [10, 57, 118, 46]],
    elevs: [e(20, 12, 42, 37, 9, "pg", 3, 10), e(87, 12, 28, 37, 9, "#000", 1, 14), e(24, 60, 43, 37, 9, "pn", 2, 12), e(86, 60, 28, 37, 9, "pd", 1, 12)],
    parts: [[33, 21, 7, 26, "#888"], [33, 21, 7, 26, "~" + YL], [41, 21, 6, 26, "#7c7c7c"], [89, 21, 10, 26, "#777"], [100, 21, 13, 26, "#222"], [41, 79, 11, 8, "#c85f00"]],
    lines: [[100, 21, 113, 47, GR], [113, 21, 100, 47, GR]],
    labels: [[32, 52], [91, 53], [31, 100], [88, 102]] },
  { x: 1082, y: 370, w: 152, lead: "#4a3f8a",
    frames: [[10, 7, 119, 48], [10, 58, 119, 47]],
    elevs: [e(26, 12, 35, 36, 9, "#2a2a2a", 3, 8), e(84, 12, 28, 36, 9, "pn", 2, 8), e(32, 61, 35, 37, 3, "pg", 2, 16), e(83, 61, 27, 37, 3, "pn", 3, 14)],
    parts: [[29, 21, 8, 27, "#777"], [50, 21, 8, 27, "#777"], [94, 30, 11, 8, "#c85f00"], [44, 78, 10, 8, "#c85f00"]],
    lines: [[37, 21, 50, 47, GR], [50, 21, 37, 47, GR]],
    labels: [[33, 52], [87, 53], [36, 101], [87, 102]] },
  { x: 274, y: 487, w: 152, lead: "#4a3f8a",
    frames: [[9, 12, 123, 43], [19, 55, 91, 47]],
    elevs: [e(12, 18, 117, 26, 6, "pg", 9, 4), e(24, 61, 78, 36, 8, "pg", 7, 4)],
    parts: [[25, 30, 8, 6, "#e8a800"], [76, 30, 8, 6, "#e8a800"], [44, 25, 10, 18, D], [44, 25, 10, 18, "~" + YL], [106, 28, 7, 16, D], [116, 28, 7, 16, D], [38, 69, 2, 28, YL], [43, 69, 2, 28, YL], [60, 69, 2, 28, YL], [65, 69, 2, 28, YL], [78, 69, 2, 28, YL], [82, 69, 2, 28, YL], [30, 74, 10, 7, "#5c4a38"], [50, 74, 10, 7, "#5c4a38"], [68, 74, 10, 7, "#5c4a38"], [88, 74, 10, 7, "#5c4a38"], [24, 95, 78, 2, O]],
    lines: [], labels: [[58, 49], [50, 100]] },
  { x: 434, y: 487, w: 152, lead: "#4a3f8a",
    frames: [[10, 12, 119, 42], [10, 59, 119, 40]],
    elevs: [e(14, 17, 115, 26, 6, "pd", 11, 8), e(13, 68, 115, 23, 6, "pd", 10, 8)],
    parts: [[42, 23, 15, 13, "#7c8ab0"], [62, 25, 8, 12, "#555"], [76, 26, 8, 12, "#555"], [88, 26, 9, 12, "#aaa"], [104, 26, 9, 12, "#aaa"], [20, 76, 8, 13, "#777"], [36, 76, 8, 13, "#777"], [44, 76, 8, 13, "#aaa"], [52, 76, 8, 6, "#555"], [64, 76, 8, 13, "#777"], [78, 76, 8, 13, "#aaa"], [98, 76, 5, 13, "#777"]],
    lines: [[70, 25, 80, 37, GR], [80, 25, 70, 37, GR], [118, 25, 128, 37, GR], [128, 25, 118, 37, GR], [28, 76, 36, 89, GR], [36, 76, 28, 89, GR], [88, 76, 98, 89, GR], [98, 76, 88, 89, GR]],
    labels: [[62, 101]] },
  { x: 593, y: 487, w: 153, lead: "#4a3f8a",
    frames: [[11, 5, 118, 48], [11, 58, 118, 46]],
    elevs: [e(25, 10, 76, 38, 9, "pd", 7, 12), e(25, 63, 75, 36, 9, "pd", 5, 14)],
    parts: [[45, 25, 12, 22, "~#a8a000"], [44, 19, 30, 2, "#a89820"], [30, 72, 66, 1, "#bbb"], [32, 72, 2, 26, M], [48, 72, 2, 26, M], [62, 72, 2, 26, M], [76, 72, 2, 26, M], [92, 72, 2, 26, M], [32, 96, 62, 2, M]],
    lines: [[47, 33, 56, 33, "#1ec850"]],
    labels: [[54, 54], [58, 102]] },
  { x: 760, y: 487, w: 152, lead: "#4a3f8a",
    frames: [[10, 5, 119, 47], [10, 55, 119, 47]],
    elevs: [e(49, 10, 44, 36, 8, "pd", 5, 12), e(49, 59, 44, 37, 10, "#9a9a9a", 3, 14)],
    parts: [[52, 18, 38, 26, "~#b0a820"], [58, 22, 26, 20, "#3a3a3a"], [62, 28, 18, 8, "#999"], [52, 18, 6, 24, "#444"], [84, 18, 6, 24, "#444"], [52, 69, 2, 27, "#1010e0"], [88, 69, 2, 27, "#1010e0"], [52, 69, 38, 1, YL], [52, 94, 38, 1, "#18c838"]],
    lines: [], labels: [[56, 51], [56, 100]] },
  { x: 925, y: 487, w: 152, lead: "#4a3f8a",
    frames: [[11, 5, 118, 47], [11, 55, 118, 47]],
    elevs: [e(26, 10, 36, 37, 9, "pn", 3, 10), e(82, 10, 29, 37, 8, "#777777", 2, 8), e(24, 60, 37, 36, 9, "pn", 3, 10), e(85, 58, 30, 35, 10, "pd", 2, 8)],
    parts: [[38, 20, 13, 26, "#2a2a2a"], [40, 22, 9, 5, "#999"], [40, 30, 9, 5, "#999"], [40, 38, 9, 5, "#999"], [85, 19, 2, 28, "#1010d0"], [92, 19, 12, 28, "#1a1a1a"], [36, 70, 14, 26, "#333"], [38, 71, 10, 5, "#aaa"], [38, 79, 10, 5, "#aaa"], [38, 87, 10, 5, "#aaa"], [92, 70, 16, 18, "~#706c30"]],
    lines: [[92, 19, 104, 47, GR], [104, 19, 92, 47, GR]],
    labels: [[30, 52], [89, 52], [28, 100], [89, 100]] },
  { x: 1082, y: 487, w: 152, lead: "#165e6c",
    frames: [[10, 7, 123, 94]],
    elevs: [],
    parts: [[17, 15, 52, 17, "~" + YL], [20, 15, 4, 17, "~" + YL], [62, 15, 4, 17, "~" + YL], [79, 16, 50, 15, "url(#pd)"], [78, 15, 52, 17, "~#18c8c8"], [84, 21, 40, 5, "~#18c8c8"], [17, 45, 53, 9, "~#18c8c8"], [18, 52, 50, 2, O], [92, 45, 18, 12, "url(#pd)"], [18, 70, 55, 15, "url(#pd)"], [22, 73, 44, 10, "~#18c8c8"], [24, 75, 40, 2, O], [92, 73, 12, 10, "~#18c8c8"]],
    lines: [[14, 86, 74, 86, "#e01818"], [86, 86, 112, 86, "#e01818"], [87, 45, 112, 45, "#e01818"], [20, 36, 66, 36, "#6a2a9a"], [78, 36, 128, 36, "#6a2a9a"], [18, 41, 72, 41, "#6a2a9a"], [20, 90, 70, 90, "#6a2a9a"]],
    labels: [[49, 95]] },
  { x: 1240, y: 487, w: 152, lead: "#165e6c",
    frames: [[6, 4, 126, 100]],
    elevs: [],
    parts: [[10, 8, 100, 31, "url(#pd)"], [115, 22, 12, 16, "url(#pn)"], [115, 22, 12, 16, "~#18c8c8"], [13, 52, 98, 17, "url(#pn)"], [11, 69, 102, 1.5, "#e01818"], [9, 75, 105, 20, "url(#pd)"], [20, 84, 35, 11, "#111"], [62, 84, 36, 11, "#111"], [98, 82, 12, 11, "url(#pn)"], [98, 93, 14, 1.5, "#e01818"]],
    lines: [[28, 18, 112, 18, "#5a2a8c"], [34, 11, 34, 24, T], [50, 11, 50, 32, T], [13, 49, 111, 49, "#5a2a8c"], [20, 45, 20, 60, T], [38, 45, 38, 60, T], [10, 98, 114, 98, "#5a2a8c"], [17, 76, 17, 96, T], [32, 74, 32, 92, T], [56, 74, 56, 92, T], [22, 84, 52, 82, "#aaa"], [64, 84, 96, 82, "#aaa"]],
    labels: [[52, 101]] },
]

const marks = [
  [50, 366], [566, 376], [1122, 376],
  [-125, 755], [416, 755], [967, 755], [1518, 755],
]
</script>

<style scoped>
.screen {
  position: relative;
  width: 1600px;
  height: 900px;
  overflow: hidden;
  background: #222933;
  font-family: "Open Sans", "Noto Sans CJK SC", sans-serif;
  font-size: 10.500px;
  color: #c8ccd2;
}
.win {
  height: 866px;
  display: flex;
  flex-direction: column;
  border-top: 2px solid #0a78b4;
  border-left: 2px solid #0a78b4;
  border-right: 2px solid #0a78b4;
  border-bottom: 1px solid #0a78b4;
  box-sizing: border-box;
  background: #222933;
}
.ic {
  width: 16px;
  height: 16px;
  flex: none;
  display: block;
}
.caret {
  width: 0;
  height: 0;
  flex: none;
  border-left: 3px solid transparent;
  border-right: 3px solid transparent;
  border-top: 3px solid #c8ccd2;
}

/* title bar */
.titlebar {
  height: 20px;
  display: flex;
  align-items: center;
  padding-left: 8px;
  white-space: nowrap;
}
.titlebar > span, .titlebar > div { flex: none; }
.logo-a {
  width: 16px;
  color: #c8202a;
  font: 700 20px "Liberation Sans", sans-serif;
  margin-right: 2px;
}
.qat {
  display: flex;
  gap: 3.500px;
  margin-left: 14px;
}
.qat .ic--undoc, .qat .ic--undoc2 { width: 8px; margin: 0 -1px; }
.workspace {
  display: flex;
  align-items: center;
  gap: 2px;
  width: 148px;
  height: 17px;
  background: #3b4453;
  margin-left: 2px;
  padding-left: 2px;
  box-sizing: border-box;
  color: #d4d7db;
}
.caret--end { margin-left: auto; margin-right: 2px; }
.custom { width: 8px; height: 8px; margin-left: 3px; }
.share { width: 14px; height: 14px; margin-left: 6px; }
.share-text { margin-left: 4px; color: #6ab8ec; }
.title {
  margin-left: 248px;
  color: #d8dbde;
  font-size: 10.500px;
}
.tri {
  margin-left: 246px;
  border-left: 4px solid #c8ccd2;
  border-top: 3px solid transparent;
  border-bottom: 3px solid transparent;
}
.search {
  width: 148px;
  height: 17px;
  line-height: 17px;
  margin-left: 5px;
  padding-left: 2px;
  box-sizing: border-box;
  background: #434d5e;
  color: #9aa2ad;
  font-style: italic;
}
.search-ic { margin-left: 4px; width: 14px; height: 14px; }
.user-ic { margin-left: 6px; width: 14px; height: 14px; }
.login { margin-left: 3px; color: #c8ccd2; }
.login-caret { margin-left: 50px; }
.cart { margin-left: 9px; width: 14px; height: 14px; }
.a360 { margin-left: 6px; width: 15px; height: 15px; margin-right: 3px; }
.vsep { width: 1px; height: 16px; background: #4a5260; margin: 0 6px 0 7px; }
.help {
  width: 14px;
  height: 14px;
  line-height: 14px;
  text-align: center;
  border-radius: 50%;
  background: #c9cdd2;
  color: #222933;
  font-weight: 700;
  margin-right: 4px;
}
.winbtns {
  display: flex;
  gap: 4px;
  margin-left: 54px;
}

/* menu */
.menubar {
  height: 18px;
  display: flex;
  align-items: center;
  padding-left: 15px;
  gap: 19.500px;
  border-bottom: 1px solid #3a4350;
  box-sizing: content-box;
}
.menu-item { white-space: nowrap; }
.docbtns {
  display: flex;
  margin-left: auto;
  gap: 1px;
  margin-right: 1px;
}

/* ribbon tabs */
.ribbon {
  height: 22px;
  display: flex;
  align-items: center;
  padding-left: 6px;
}
.rtab {
  height: 17px;
  line-height: 17px;
  padding: 0 7px;
  white-space: nowrap;
  margin-right: 1px;
}
.rtab--on { background: #3b4453; color: #e6e8ea; }
.rtab--blue { background: #0a6ea8; color: #e6f2fa; padding: 0 7.500px; }
.panel-ic { margin-left: 16px; width: 14px; height: 14px; margin-right: 2px; }

/* file tabs */
.filetabs {
  height: 19px;
  display: flex;
  align-items: flex-end;
  padding-left: 22px;
}
.ftab {
  height: 18px;
  line-height: 18px;
  box-sizing: border-box;
  border-radius: 7px 7px 0 0;
}
.ftab--home { width: 102px; padding-left: 8px; background: #2a313d; }
.ftab--on {
  width: 103px;
  padding-left: 8px;
  background: #3b4453;
  color: #fff;
  font-weight: 600;
  display: flex;
  justify-content: space-between;
  padding-right: 6px;
}
.ftab-x { color: #aab; font-size: 14px; font-weight: 400; }
.ftab-add {
  width: 18px;
  height: 14px;
  line-height: 13px;
  margin-left: 6px;
  text-align: center;
  background: #2f3744;
  border-radius: 4px 4px 0 0;
  font-size: 14px;
}

/* toolbars */
.toolarea {
  height: 49px;
  background: #3b4453;
  padding: 4px 0 0 3px;
  box-sizing: border-box;
}
.tb {
  display: flex;
  align-items: center;
  background: #2c3440;
}
.tb--one { width: 1241px; height: 19px; margin-bottom: 2px; }
.tb--two { width: 1020px; height: 21px; }
.tb .ic { margin: 0 1.800px; }
.tb .ic--undoc, .tb .ic--undoc2 { width: 10px; margin: 0; }
.tb--one .drop--std { margin-right: 1px; }
.grip {
  width: 3px;
  height: 15px;
  margin: 0 2px 0 2px;
  flex: none;
  background: repeating-linear-gradient(#9aa2ad 0 1px, transparent 1px 3px);
}
.sep {
  width: 1px;
  height: 17px;
  flex: none;
  background: #5b6472;
  margin: 0 1.500px;
}
.drop {
  position: relative;
  height: 18px;
  line-height: 18px;
  background: #e4e4e4;
  color: #1d1d1d;
  flex: none;
  box-sizing: border-box;
  padding-left: 5px;
  box-shadow: 0 0 0 1px #808890;
  white-space: nowrap;
  font-size: 11px;
}
.drop::after {
  content: "";
  position: absolute;
  right: 6px;
  top: 6px;
  width: 4px;
  height: 4px;
  border-right: 1px solid #555;
  border-bottom: 1px solid #555;
  transform: rotate(45deg);
}
.drop--std { width: 100px; }
.drop--c { padding-left: 16px; }
.drop--scale { width: 85px; background: #fff; margin-left: 1px; }
.drop--ws { width: 146px; margin-left: 1px; padding-left: 8px; }
.tb .ws-gear { margin-left: 1px; }
.tb .layer-prop { margin-left: 8px; }
.drop--layer {
  width: 250px;
  display: flex;
  align-items: center;
  padding-left: 0;
  margin-right: 1px;
}
.tb .drop--layer .ic { width: 14px; height: 14px; margin: 0 .800px; }
.swatch {
  width: 10px;
  height: 10px;
  flex: none;
  background: #0a6e8c;
  border: 1px solid #111;
  margin-left: 2px;
}
.swatch--gray { background: #555; margin: 0 5px 0 -2px; display: inline-block; vertical-align: -2px; }
.layer-name { margin-left: 4px; }
.drop--color { width: 125px; margin-left: 1px; }
.drop--ltype { width: 133px; margin-left: 5px; }
.drop--lweight { width: 105px; margin-left: 5px; }
.drop--off { width: 100px; margin-left: 6px; background: #b4b4b4; color: #808080; }
.lt-line {
  display: inline-block;
  width: 50px;
  height: 1px;
  background: #333;
  vertical-align: 3px;
  margin-right: 5px;
}
.lt-line--short { width: 30px; }

/* work area */
.work {
  flex: 1;
  min-height: 0;
  display: flex;
}
.side {
  background: #3b4453;
  display: flex;
  align-items: flex-start;
}
.side--left { width: 50px; padding-left: 3px; gap: 3px; box-sizing: border-box; }
.side--right { width: 28px; flex-direction: column; padding-left: 2px; gap: 2px; box-sizing: border-box; }
.col {
  width: 20px;
  background: #2f3744;
  display: flex;
  flex-direction: column;
  align-items: center;
  padding-bottom: 8px;
  margin-top: 1px;
  outline: 1px solid #464f5d;
}
.col .ic { height: 16px; margin: 1.150px 0; }
.col-grip {
  width: 14px;
  height: 3px;
  margin: 3px 0 1px;
  flex: none;
  background: repeating-linear-gradient(90deg, #9aa2ad 0 1px, transparent 1px 2px);
}
.col-sep {
  width: 17px;
  height: 1px;
  background: #e6e8ea;
  margin: 1.500px 0;
  flex: none;
}
.col--r2 { margin-top: 0; }
.center {
  flex: 1;
  min-width: 0;
  display: flex;
  flex-direction: column;
}
.canvas {
  flex: 1;
  min-height: 0;
  display: block;
  background: #000;
}
.hscroll {
  height: 14px;
  flex: none;
  background: #f0f0f0;
  color: #333;
  line-height: 12px;
  padding-left: 6px;
  font-size: 15px;
}
.hs-arrow { font-weight: 700; }
.vscroll {
  width: 15px;
  background: #f0f0f0;
  position: relative;
  flex: none;
  display: flex;
  flex-direction: column;
  align-items: center;
}
.vs-up {
  margin-top: 6px;
  width: 5px;
  height: 5px;
  border-left: 1px solid #333;
  border-top: 1px solid #333;
  transform: rotate(45deg);
}
.vs-thumb {
  margin-top: 320px;
  width: 13px;
  height: 14px;
  background: #cdcdcd;
}

/* status row */
.statusrow {
  height: 26px;
  flex: none;
  display: flex;
  align-items: flex-start;
  padding: 0 0 0 16px;
}
.ltab {
  height: 14px;
  line-height: 14px;
  margin-top: 1px;
  padding: 1px 6px;
  margin-right: 7px;
  background: #2f3744;
  border-radius: 0 0 5px 5px;
  color: #aab0b8;
  font-size: 10.500px;
  white-space: nowrap;
}
.ltab--on { color: #e8eaec; background: #3b4453; font-weight: 700; }
.ltab--add { padding: 1px 4px; margin-left: 4px; }
.status {
  margin-left: auto;
  display: flex;
  align-items: center;
  height: 20px;
  margin-top: 2px;
  background: #2f3744;
  gap: 3px;
  padding-right: 4px;
}
.st-text { background: #3b4453; height: 20px; line-height: 20px; padding: 0 4px; }
.st-btn { width: 18px; height: 18px; display: flex; align-items: center; justify-content: center; }
.st-btn--on { background: #5b94c8; }
.st-gap { width: 5px; }
.status > .ic { margin: 0 2px; }

/* taskbar */
.taskbar {
  height: 34px;
  display: flex;
  background: #2a2226;
  color: #dcdcdc;
}
.task {
  width: 41px;
  height: 34px;
  flex: none;
  display: flex;
  align-items: center;
  justify-content: center;
  box-sizing: border-box;
}
.task .ic { width: 20px; height: 20px; }
.task--run { border-bottom: 2px solid #78b4e0; }
.task--green { background: #3d6b40; border-bottom: 2px solid #42d040; }
.task--active { background: #55494c; border-bottom: 2px solid #78b4e0; }
.sogou {
  width: 20px;
  height: 20px;
  border-radius: 50%;
  background: #fff;
  color: #2a78d8;
  text-align: center;
  font: 700 17px/20px "Liberation Sans", sans-serif;
}
.tile-3 {
  width: 20px;
  height: 20px;
  background: #c8e8e0;
  color: #0e8a90;
  text-align: center;
  font: 700 17px/20px "Liberation Sans", sans-serif;
}
.tile-a {
  width: 20px;
  height: 20px;
  background: #f0eeee;
  color: #c8202a;
  text-align: center;
  font: 700 18px/20px "Liberation Sans", sans-serif;
}
.red-tile { background: #e01a2b; border-radius: 4px; }
.tray {
  margin-left: auto;
  display: flex;
  align-items: center;
  gap: 2px;
  font-size: 10.500px;
  white-space: nowrap;
}
.tray > .ic { width: 15px; height: 15px; margin: 0 1.500px; }
.tray > .ic--volume { margin-left: -3px; }
.net {
  display: flex;
  flex-direction: column;
  width: 56px;
  line-height: 15px;
}
.mon {
  width: 135px;
  line-height: 15px;
}
.mon-hi { background: #777; color: #ddd; }
.mon-fill { display: inline-block; width: 40px; height: 11px; background: #777; }
.chev {
  width: 6px;
  height: 6px;
  margin: 3px 7px 0 10px;
  border-left: 1px solid #ddd;
  border-top: 1px solid #ddd;
  transform: rotate(45deg);
}
.ime { margin-left: 5px; font-size: 12px; }
.s-tray {
  width: 14px;
  height: 14px;
  margin-left: 8px;
  background: #f05a1e;
  border-radius: 3px;
  color: #fff;
  text-align: center;
  font: 700 12px/14px "Liberation Sans", sans-serif;
}
.clock {
  display: flex;
  flex-direction: column;
  align-items: center;
  line-height: 15px;
  margin-left: 10px;
  font-size: 11px;
  color: #ccc;
}
.tray > .notify { margin: 0 18px 0 12px; width: 16px; height: 16px; }

/* overlays */
.cmd-history {
  position: absolute;
  left: 408px;
  top: 768px;
  display: flex;
  flex-direction: column;
  align-items: flex-start;
  gap: 3.500px;
}
.cmd-line {
  height: 13px;
  line-height: 13px;
  padding: 0 2px;
  background: #595959;
  color: #d8d8d8;
  border-radius: 2px;
  font-size: 10.500px;
}
.cmd-line--dark { background: #363636; color: #8c8c8c; }
.cmd {
  position: absolute;
  left: 358px;
  top: 817px;
  width: 907px;
  height: 21px;
  display: flex;
}
.cmd-tools {
  width: 45px;
  display: flex;
  align-items: center;
  background: #555e6c;
  gap: 2px;
  padding-left: 1px;
  box-sizing: border-box;
}
.cmd-tools .ic { width: 13px; height: 13px; margin-left: 3px; }
.cmd-grip {
  width: 3px;
  height: 16px;
  background: repeating-linear-gradient(#d8d8d8 0 1px, transparent 1px 2px);
}
.cmd-input {
  flex: 1;
  display: flex;
  flex-direction: column;
  background: #fff;
}
.cmd-strip { height: 7px; background: #aaa; }
.cmd-field {
  position: relative;
  flex: 1;
  display: flex;
  align-items: center;
  padding-left: 4px;
  gap: 3px;
  background: #f8f8f8;
}
.cmd-field .ic { width: 13px; height: 13px; margin-top: -8px; filter: invert(1) brightness(.5); }
.caret--dark { border-top-color: #666; margin-top: -6px; }
.cmd-ph {
  margin: -8px 0 0 6px;
  color: #a0a0a0;
  font-style: italic;
}
.cmd-up {
  position: absolute;
  right: 4px;
  top: 3px;
  border-left: 3px solid transparent;
  border-right: 3px solid transparent;
  border-bottom: 4px solid #666;
}
.bubbles {
  position: absolute;
  left: 1340px;
  top: 755px;
}
.bb {
  font: 10px "Noto Sans CJK SC", sans-serif;
  fill: #111;
}
.bb--link {
  fill: #1414e6;
  text-decoration: underline;
}
.watermark {
  position: absolute;
  left: 0;
  top: 0;
  pointer-events: none;
}
.wm {
  font: 700 36px "Liberation Sans", "Noto Sans CJK SC", sans-serif;
  fill: rgba(255, 255, 255, .05);
  stroke: rgba(255, 255, 255, .1);
  stroke-width: 1.500px;
}
.zm {
  position: absolute;
  left: 1406px;
  top: 755px;
  font: 400 62px/90px "Noto Sans CJK SC", sans-serif;
  color: rgba(228, 228, 228, .88);
  -webkit-text-stroke: 1px rgba(120, 120, 120, .8);
}
.id-tag {
  position: absolute;
  left: 1362px;
  top: 842px;
  font: 400 32px/38px "Liberation Sans", sans-serif;
  color: #f4f4f4;
  text-shadow: 0 0 2px #222;
  white-space: nowrap;
}
</style>

<style>
html, body { margin: 0; background: #222933; }
</style>
